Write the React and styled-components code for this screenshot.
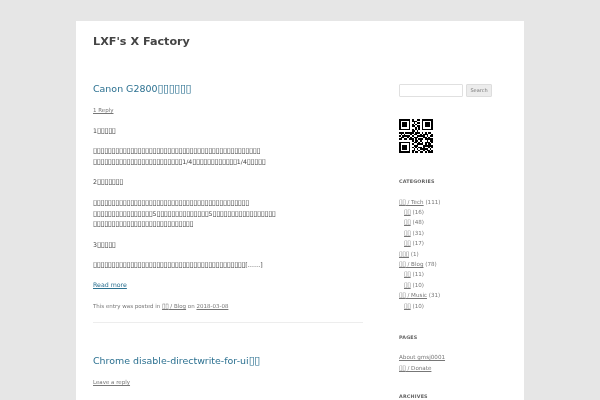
import React from 'react'
import styled, { createGlobalStyle } from 'styled-components'

const GlobalStyle = createGlobalStyle`
  html, body { margin: 0; padding: 0; background: #e6e6e6; height: 400px; overflow: hidden; }
  body { font-family: "DejaVu Sans", sans-serif; color: #444; }
`

// the screenshot has empty boxes where its font had no glyph
const Tofu = styled.span`
  font-size: 1.2em;
  letter-spacing: -0.055em;
`
const box = (n) => <Tofu>{'\u25AF'.repeat(n)}</Tofu>

const Page = styled.div`
  width: 448px;
  height: 379px;
  margin: 21px auto 0;
  padding: 0 17px;
  box-sizing: border-box;
  background: #fff;
  overflow: hidden;
`
const SiteTitle = styled.h1`
  margin: 0;
  padding-top: 14px;
  font-size: 11.2px;
  line-height: 14px;
  font-weight: 700;
  color: #444;
  filter: blur(0.2px);
`
const Columns = styled.div`
  display: grid;
  grid-template-columns: 270px 94px;
  gap: 36px;
  margin-top: 32px;
  filter: blur(0.25px);
`
const Main = styled.main`
  min-width: 0;
`
const Entry = styled.article`
  padding-bottom: 11px;
  margin-bottom: 30px;
  border-bottom: 1px solid #ededed;
`
const EntryTitle = styled.h2`
  margin: 0;
  font-size: 9.45px;
  line-height: 14px;
  font-weight: 400;
  color: #2b7090;
`
const ReplyLink = styled.a`
  display: block;
  margin-top: 10px;
  font-size: 5.5px;
  line-height: 9px;
  color: #777;
  text-decoration: underline;
`
const Para = styled.p`
  margin: 9.7px 0 0;
  font-size: 6.25px;
  line-height: 10.7px;
  color: #444;
  &:first-of-type { margin-top: 11px; }
`
const More = styled.a`
  display: block;
  margin-top: 9.5px;
  font-size: 6.25px;
  line-height: 10.7px;
  color: #2b7090;
  text-decoration: underline;
`
const EntryMeta = styled.footer`
  margin-top: 11.5px;
  font-size: 5.5px;
  line-height: 9px;
  color: #777;
  a { color: #777; text-decoration: underline; }
`
const Side = styled.aside`
  min-width: 0;
  padding-top: 3px;
`
const SearchRow = styled.form`
  display: flex;
  align-items: center;
  gap: 3px;
`
const SearchInput = styled.div`
  width: 64px;
  height: 13px;
  box-sizing: border-box;
  border: 1px solid #e0e0e0;
  border-radius: 1px;
`
const SearchButton = styled.div`
  width: 26px;
  height: 13px;
  box-sizing: border-box;
  border: 1px solid #ddd;
  border-radius: 1px;
  background: #ececec;
  font-size: 5px;
  line-height: 11px;
  text-align: center;
  color: #777;
`
const QrWrap = styled.div`
  margin-top: 22px;
  width: 34px;
  height: 34px;
`
const WidgetTitle = styled.h3`
  margin: ${(p) => p.$top}px 0 0;
  font-size: 4.8px;
  line-height: 8px;
  font-weight: 700;
  letter-spacing: 0.2px;
  color: #636363;
  text-transform: uppercase;
`
const List = styled.ul`
  list-style: none;
  margin: 10.5px 0 0;
  padding: 0;
`
const Item = styled.li`
  padding-left: ${(p) => (p.$sub ? 5 : 0)}px;
  font-size: 5.6px;
  line-height: 10.4px;
  color: #777;
  a { color: #777; text-decoration: underline; }
`

// finder squares are fixed, the rest of the modules is read off the screenshot
const qrRows = [
  '111111101001101111111',
  '100000101110001000001',
  '101110100101101011101',
  '101110101010001011101',
  '101110101101101011101',
  '100000100010101000001',
  '111111101010101111111',
  '000000001101000000000',
  '111011111011101010110',
  '010100010110010111001',
  '101111101001111101011',
  '011001010111000110100',
  '110110111010111011111',
  '000000001011010001011',
  '111111100110101011101',
  '100000101001111010110',
  '101110100111000111111',
  '101110101010110100101',
  '101110100101011111010',
  '100000101100100101101',
  '111111101011011010111',
]

const QrCode = () => (
  <svg width="34" height="34" viewBox="0 0 21 21" shapeRendering="crispEdges">
    {qrRows.map((row, y) =>
      row.split('').map((c, x) => (c === '1' ? <rect key={`${x}-${y}`} x={x} y={y} width="1" height="1" fill="#000" /> : null))
    )}
  </svg>
)

const categories = [
  { label: <>{box(2)} / Tech</>, count: 111 },
  { label: box(2), count: 16, sub: true },
  { label: box(2), count: 48, sub: true },
  { label: box(2), count: 31, sub: true },
  { label: box(2), count: 17, sub: true },
  { label: box(3), count: 1 },
  { label: <>{box(2)} / Blog</>, count: 78 },
  { label: box(2), count: 11, sub: true },
  { label: box(2), count: 10, sub: true },
  { label: <>{box(2)} / Music</>, count: 31 },
  { label: box(2), count: 10, sub: true },
]

export default function App() {
  return (
    <>
      <GlobalStyle />
      <Page>
        <SiteTitle>LXF's X Factory</SiteTitle>
        <Columns>
          <Main>
            <Entry>
              <EntryTitle>Canon G2800{box(6)}</EntryTitle>
              <ReplyLink>1 Reply</ReplyLink>
              <Para>1{box(5)}</Para>
              <Para>
                {box(45)}
                <br />
                {box(24)}1/4{box(12)}1/4{box(5)}
              </Para>
              <Para>2{box(7)}</Para>
              <Para>
                {box(42)}
                <br />
                {box(16)}5{box(14)}5{box(17)}
                <br />
                {box(27)}
              </Para>
              <Para>3{box(5)}</Para>
              <Para>{box(41)}[……]</Para>
              <More>Read more</More>
              <EntryMeta>
                This entry was posted in <a>{box(2)} / Blog</a> on <a>2018-03-08</a>
              </EntryMeta>
            </Entry>
            <EntryTitle>Chrome disable-directwrite-for-ui{box(2)}</EntryTitle>
            <ReplyLink>Leave a reply</ReplyLink>
            <Para>Chrome {box(5)} UI {box(6)} <a>DirectWrite {box(24)}</a></Para>
          </Main>
          <Side>
            <SearchRow>
              <SearchInput />
              <SearchButton>Search</SearchButton>
            </SearchRow>
            <QrWrap>
              <QrCode />
            </QrWrap>
            <WidgetTitle $top={25}>Categories</WidgetTitle>
            <List>
              {categories.map((c, i) => (
                <Item key={i} $sub={c.sub}>
                  <a>{c.label}</a> ({c.count})
                </Item>
              ))}
            </List>
            <WidgetTitle $top={23}>Pages</WidgetTitle>
            <List>
              <Item><a>About gmsj0001</a></Item>
              <Item><a>{box(2)} / Donate</a></Item>
            </List>
            <WidgetTitle $top={20}>Archives</WidgetTitle>
          </Side>
        </Columns>
      </Page>
    </>
  )
}
